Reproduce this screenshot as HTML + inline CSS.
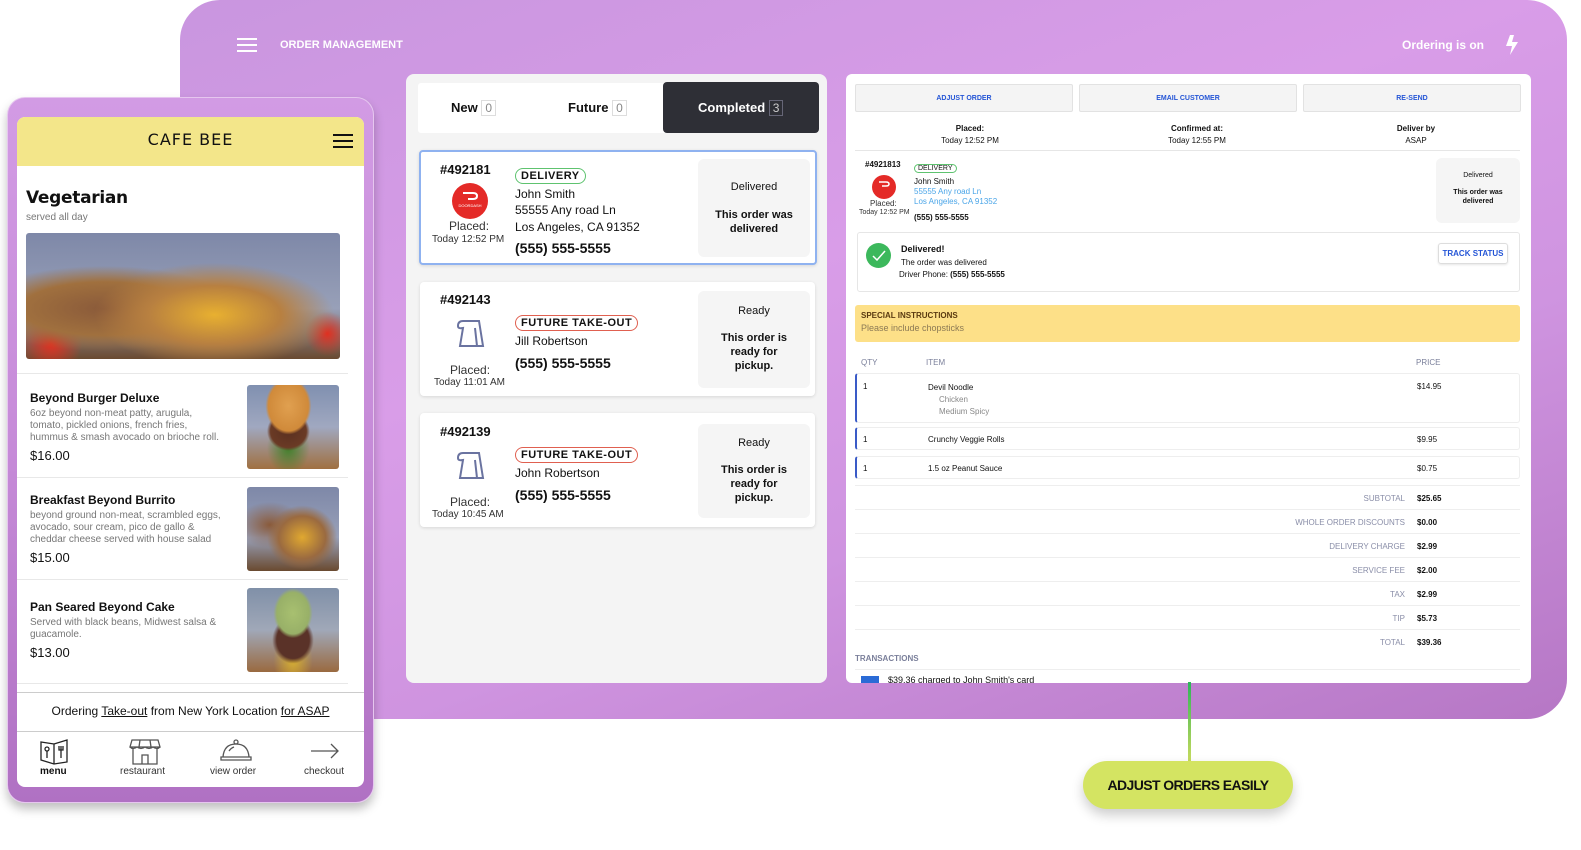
<!DOCTYPE html>
<html><head><meta charset="utf-8"><style>
*{box-sizing:border-box;margin:0;padding:0}
body{width:1581px;height:850px;background:#fff;position:relative;overflow:hidden;font-family:"Liberation Sans",Arial,sans-serif;color:#111}
.a{position:absolute}
.big{left:180px;top:0;width:1387px;height:719px;border-radius:40px 40px 40px 0;background:linear-gradient(160deg,#c996df 0%,#d99de8 40%,#cf94e0 65%,#b677c5 100%)}
.card{background:#fff;border-radius:4px;box-shadow:0 1px 3px rgba(0,0,0,.12)}
.st{background:#f5f5f5;border-radius:6px;text-align:center;font-size:11px}
.badge{display:inline-block;border:1.5px solid #e06050;border-radius:10px;padding:1px 5px;font-size:11px;font-weight:bold;letter-spacing:.5px}
.btn{top:84px;height:28px;width:218px;background:#f4f4f4;border:1px solid #e2e2e2;border-radius:2px;text-align:center;line-height:28px;font-size:7px;color:#2455d6;font-weight:bold}
.sm{font-size:8px}
.row{left:855px;width:665px;background:#fff;border:1px solid #eee;border-left:2px solid #3a5bc7;border-radius:3px;font-size:8px}
.tot{left:855px;width:665px;border-top:1px solid #eee;font-size:8px;height:24px}
.tot .l{position:absolute;right:115px;top:8px;color:#8a8ea8}
.tot .v{position:absolute;left:562px;top:8px;font-weight:bold}
.dd{border-radius:50%;background:#e42a27;color:#fff;text-align:center}
</style></head><body>
<div class="a big"></div>
<div class="a" style="left:237px;top:38px;width:20px;height:2px;background:#fff;box-shadow:0 6px 0 #fff,0 12px 0 #fff"></div>
<div class="a" style="left:280px;top:39px;color:#fff;font-size:11px;font-weight:bold">ORDER MANAGEMENT</div>
<div class="a" style="left:1402px;top:38px;color:#fff;font-size:12px;font-weight:bold">Ordering is on</div>
<svg class="a" style="left:1503px;top:35px" width="18" height="20" viewBox="0 0 18 20"><path d="M7 0 L3 11 H9 L7 20 L15 7 H9 L11 0Z" fill="#fff"/></svg>

<div class="a" style="left:406px;top:74px;width:421px;height:609px;background:#f4f4f4;border-radius:8px"></div>
<div class="a" style="left:418px;top:83px;width:400px;height:50px;background:#fff;border-radius:3px"></div>
<div class="a" style="left:663px;top:82px;width:156px;height:51px;background:#2e2f36;border-radius:4px"></div>
<div class="a" style="left:451px;top:100px;font-size:13px;font-weight:bold">New <span style="border:1px solid #ddd;color:#888;font-weight:normal;padding:0 3px;font-size:12px">0</span></div>
<div class="a" style="left:568px;top:100px;font-size:13px;font-weight:bold">Future <span style="border:1px solid #ddd;color:#888;font-weight:normal;padding:0 3px;font-size:12px">0</span></div>
<div class="a" style="left:698px;top:100px;font-size:13px;font-weight:bold;color:#fff">Completed <span style="border:1px solid #667;color:#ccc;font-weight:normal;padding:0 3px;font-size:12px">3</span></div>

<div class="a card" style="left:419px;top:150px;width:398px;height:115px;border:2px solid #8fb2f0"></div>
<div class="a" style="left:440px;top:162px;font-size:13px;font-weight:bold">#492181</div>
<div class="a dd" style="left:452px;top:183px;width:36px;height:36px;font-size:4px;line-height:45px">DOORDASH</div>
<svg class="a" style="left:462px;top:192px" width="16" height="8"><path d="M1 1 H11 Q15 1 15 4 Q15 7 11 7 H6" stroke="#fff" stroke-width="2" fill="none"/></svg>
<div class="a" style="left:449px;top:219px;font-size:12px;color:#333">Placed:</div>
<div class="a" style="left:432px;top:234px;font-size:10px;color:#333">Today 12:52 PM</div>
<div class="a" style="left:515px;top:166px"><span class="badge" style="border-color:#5ec36f">DELIVERY</span></div>
<div class="a" style="left:515px;top:187px;font-size:12px;line-height:15px">John Smith<br><span style="line-height:17px">55555 Any road Ln<br>Los Angeles, CA 91352</span></div>
<div class="a" style="left:515px;top:240px;font-size:14px;font-weight:bold">(555) 555-5555</div>
<div class="a st" style="left:698px;top:159px;width:112px;height:98px;padding-top:22px">Delivered<br><b style="display:block;margin-top:15px;line-height:14px">This order was<br>delivered</b></div>

<div class="a card" style="left:420px;top:282px;width:395px;height:114px"></div>
<div class="a" style="left:440px;top:292px;font-size:13px;font-weight:bold">#492143</div>
<svg class="a" style="left:455px;top:318px" width="32" height="32" viewBox="0 0 32 32" fill="none" stroke="#6a73a0" stroke-width="2"><path d="M3 8 Q3 3 8 3 H24 L28 28 H5 L8 10 Q3 11 3 8Z M20 10 L22 28"/></svg>
<div class="a" style="left:450px;top:363px;font-size:12px;color:#333">Placed:</div>
<div class="a" style="left:434px;top:377px;font-size:10px;color:#333">Today 11:01 AM</div>
<div class="a" style="left:515px;top:313px"><span class="badge">FUTURE TAKE-OUT</span></div>
<div class="a" style="left:515px;top:334px;font-size:12px">Jill Robertson</div>
<div class="a" style="left:515px;top:355px;font-size:14px;font-weight:bold">(555) 555-5555</div>
<div class="a st" style="left:698px;top:291px;width:112px;height:97px;padding-top:14px">Ready<br><b style="display:block;margin-top:14px;line-height:14px">This order is<br>ready for<br>pickup.</b></div>

<div class="a card" style="left:420px;top:413px;width:395px;height:114px"></div>
<div class="a" style="left:440px;top:424px;font-size:13px;font-weight:bold">#492139</div>
<svg class="a" style="left:455px;top:450px" width="32" height="32" viewBox="0 0 32 32" fill="none" stroke="#6a73a0" stroke-width="2"><path d="M3 8 Q3 3 8 3 H24 L28 28 H5 L8 10 Q3 11 3 8Z M20 10 L22 28"/></svg>
<div class="a" style="left:450px;top:495px;font-size:12px;color:#333">Placed:</div>
<div class="a" style="left:432px;top:509px;font-size:10px;color:#333">Today 10:45 AM</div>
<div class="a" style="left:515px;top:445px"><span class="badge">FUTURE TAKE-OUT</span></div>
<div class="a" style="left:515px;top:466px;font-size:12px">John Robertson</div>
<div class="a" style="left:515px;top:487px;font-size:14px;font-weight:bold">(555) 555-5555</div>
<div class="a st" style="left:698px;top:424px;width:112px;height:94px;padding-top:13px">Ready<br><b style="display:block;margin-top:14px;line-height:14px">This order is<br>ready for<br>pickup.</b></div>

<div class="a" style="left:846px;top:74px;width:685px;height:609px;background:#fff;border-radius:6px"></div>
<div class="a btn" style="left:855px">ADJUST ORDER</div>
<div class="a btn" style="left:1079px">EMAIL CUSTOMER</div>
<div class="a btn" style="left:1303px">RE-SEND</div>
<div class="a sm" style="left:910px;top:123px;width:120px;text-align:center;line-height:12px"><b>Placed:</b><br>Today 12:52 PM</div>
<div class="a sm" style="left:1137px;top:123px;width:120px;text-align:center;line-height:12px"><b>Confirmed at:</b><br>Today 12:55 PM</div>
<div class="a sm" style="left:1356px;top:123px;width:120px;text-align:center;line-height:12px"><b>Deliver by</b><br>ASAP</div>
<div class="a" style="left:855px;top:150px;width:665px;height:1px;background:#e6e6e6"></div>
<div class="a sm" style="left:865px;top:160px;font-weight:bold">#4921813</div>
<div class="a dd" style="left:872px;top:175px;width:24px;height:24px"></div>
<svg class="a" style="left:878px;top:181px" width="12" height="6"><path d="M1 1 H8 Q11 1 11 3 Q11 5 8 5 H4" stroke="#fff" stroke-width="1.5" fill="none"/></svg>
<div class="a" style="left:870px;top:199px;font-size:8px;color:#333">Placed:</div>
<div class="a" style="left:859px;top:209px;font-size:7px;color:#333">Today 12:52 PM</div>
<div class="a" style="left:914px;top:164px;border:1px solid #5ec36f;border-radius:6px;font-size:7px;padding:0 3px">DELIVERY</div>
<div class="a sm" style="left:914px;top:177px;line-height:10px">John Smith<br><span style="color:#4aa5e8">55555 Any road Ln<br>Los Angeles, CA 91352</span></div>
<div class="a sm" style="left:914px;top:213px;font-weight:bold">(555) 555-5555</div>
<div class="a st" style="left:1436px;top:158px;width:84px;height:65px;font-size:7px;padding-top:14px">Delivered<br><b style="display:block;margin-top:9px;line-height:9px">This order was<br>delivered</b></div>
<div class="a" style="left:857px;top:232px;width:663px;height:60px;border:1px solid #e6e6e6;border-radius:3px"></div>
<div class="a" style="left:866px;top:243px;width:25px;height:25px;border-radius:50%;background:#3cb85c"></div>
<svg class="a" style="left:872px;top:250px" width="14" height="11"><path d="M1 6 L5 10 L13 1" stroke="#fff" stroke-width="1.5" fill="none"/></svg>
<div class="a" style="left:901px;top:244px;font-size:9px;font-weight:bold">Delivered!</div>
<div class="a" style="left:901px;top:258px;font-size:8px">The order was delivered</div>
<div class="a" style="left:899px;top:270px;font-size:8px">Driver Phone: <b>(555) 555-5555</b></div>
<div class="a" style="left:1438px;top:243px;width:70px;height:21px;border:1px solid #ddd;border-radius:3px;font-size:8px;color:#2455d6;font-weight:bold;text-align:center;line-height:20px;box-shadow:0 1px 2px rgba(0,0,0,.1)">TRACK STATUS</div>
<div class="a" style="left:855px;top:305px;width:665px;height:37px;background:#fde088;border-radius:3px"></div>
<div class="a" style="left:861px;top:311px;font-size:8px;font-weight:bold;color:#5a3a10">SPECIAL INSTRUCTIONS</div>
<div class="a" style="left:861px;top:323px;font-size:9px;color:#8c7a55">Please include chopsticks</div>
<div class="a" style="left:861px;top:358px;font-size:8px;color:#7a7f9a">QTY</div>
<div class="a" style="left:926px;top:358px;font-size:8px;color:#7a7f9a">ITEM</div>
<div class="a" style="left:1416px;top:358px;font-size:8px;color:#7a7f9a">PRICE</div>
<div class="a row" style="top:373px;height:50px"><span class="a" style="left:6px;top:8px">1</span><span class="a" style="left:71px;top:8px;line-height:12px">Devil Noodle<br><span style="color:#888;margin-left:11px">Chicken</span><br><span style="color:#888;margin-left:11px">Medium Spicy</span></span><span class="a" style="left:560px;top:8px">$14.95</span></div>
<div class="a row" style="top:427px;height:23px"><span class="a" style="left:6px;top:7px">1</span><span class="a" style="left:71px;top:7px">Crunchy Veggie Rolls</span><span class="a" style="left:560px;top:7px">$9.95</span></div>
<div class="a row" style="top:456px;height:23px"><span class="a" style="left:6px;top:7px">1</span><span class="a" style="left:71px;top:7px">1.5 oz Peanut Sauce</span><span class="a" style="left:560px;top:7px">$0.75</span></div>
<div class="a tot" style="top:485px"><span class="l">SUBTOTAL</span><span class="v">$25.65</span></div>
<div class="a tot" style="top:509px"><span class="l">WHOLE ORDER DISCOUNTS</span><span class="v">$0.00</span></div>
<div class="a tot" style="top:533px"><span class="l">DELIVERY CHARGE</span><span class="v">$2.99</span></div>
<div class="a tot" style="top:557px"><span class="l">SERVICE FEE</span><span class="v">$2.00</span></div>
<div class="a tot" style="top:581px"><span class="l">TAX</span><span class="v">$2.99</span></div>
<div class="a tot" style="top:605px"><span class="l">TIP</span><span class="v">$5.73</span></div>
<div class="a tot" style="top:629px"><span class="l">TOTAL</span><span class="v">$39.36</span></div>
<div class="a" style="left:855px;top:654px;font-size:8px;font-weight:bold;color:#7a7f9a">TRANSACTIONS</div>
<div class="a" style="left:855px;top:669px;width:665px;height:1px;background:#eee"></div>
<div class="a" style="left:846px;top:672px;width:685px;height:11px;overflow:hidden"><div style="position:absolute;left:15px;top:4px;width:18px;height:7px;background:#2a6bd6"></div><div style="position:absolute;left:42px;top:3px;font-size:9px">$39.36 charged to John Smith's card</div></div>

<div class="a" style="left:1188px;top:682px;width:3px;height:80px;background:linear-gradient(#2bb35a,#7ec85a,#c8dc5e)"></div>
<div class="a" style="left:1083px;top:761px;width:210px;height:48px;border-radius:24px;background:#d4e462;box-shadow:0 6px 12px rgba(0,0,0,.2);text-align:center;line-height:48px;font-size:14px;font-weight:bold;letter-spacing:-.6px">ADJUST ORDERS EASILY</div>

<div class="a" style="left:7px;top:97px;width:367px;height:706px;border-radius:18px;background:linear-gradient(#d29be4,#c68bd8 50%,#b071c3);box-shadow:0 6px 10px rgba(0,0,0,.25);border:1px solid #e6c6ef"></div>
<div class="a" style="left:17px;top:117px;width:347px;height:670px;background:#fff;border-radius:8px;overflow:hidden">
 <div style="height:49px;background:#f3e68a;text-align:center;line-height:46px;font-size:16px;letter-spacing:1px;font-family:'DejaVu Sans',sans-serif">CAFE BEE</div>
 <div class="a" style="left:316px;top:17px;width:20px;height:2px;background:#111;box-shadow:0 6px 0 #111,0 12px 0 #111"></div>
 <div class="a" style="left:9px;top:71px;font-size:17px;font-family:'DejaVu Sans',sans-serif;font-weight:bold;letter-spacing:-.3px">Vegetarian</div>
 <div class="a" style="left:9px;top:95px;font-size:10px;color:#777">served all day</div>
 <div class="a" style="left:9px;top:116px;width:314px;height:126px;border-radius:3px;background:radial-gradient(ellipse at 60% 65%,#e8b030 0,#b88040 25%,transparent 45%),radial-gradient(ellipse at 25% 60%,#8a5a3a 0,#a0703e 25%,transparent 40%),radial-gradient(circle at 8% 88%,#e03020 0,transparent 10%),radial-gradient(circle at 96% 80%,#e03020 0,transparent 7%),linear-gradient(#7e88a8,#98a0b8 60%,#6a4a30)"></div>
 <div class="a" style="left:0;top:256px;width:331px;height:1px;background:#e8e8e8"></div>
 <div class="a" style="left:13px;top:274px;font-size:12px;font-weight:bold">Beyond Burger Deluxe</div>
 <div class="a" style="left:13px;top:291px;font-size:10px;color:#777;line-height:12px">6oz beyond non-meat patty, arugula,<br>tomato, pickled onions, french fries,<br>hummus &amp; smash avocado on brioche roll.</div>
 <div class="a" style="left:13px;top:331px;font-size:13px">$16.00</div>
 <div class="a" style="left:230px;top:268px;width:92px;height:84px;border-radius:3px;background:radial-gradient(ellipse at 45% 25%,#e0a050 0,#d08a3a 28%,transparent 32%),radial-gradient(ellipse at 45% 55%,#5a3020 0,#6a3a25 25%,transparent 30%),radial-gradient(ellipse at 45% 75%,#40802a 0,transparent 30%),linear-gradient(#8090b0,#a0a8c0 50%,#a07040)"></div>
 <div class="a" style="left:0;top:360px;width:331px;height:1px;background:#e8e8e8"></div>
 <div class="a" style="left:13px;top:376px;font-size:12px;font-weight:bold">Breakfast Beyond Burrito</div>
 <div class="a" style="left:13px;top:393px;font-size:10px;color:#777;line-height:12px">beyond ground non-meat, scrambled eggs,<br>avocado, sour cream, pico de gallo &amp;<br>cheddar cheese served with house salad</div>
 <div class="a" style="left:13px;top:433px;font-size:13px">$15.00</div>
 <div class="a" style="left:230px;top:370px;width:92px;height:84px;border-radius:3px;background:radial-gradient(ellipse at 60% 60%,#e0a830 0,#9a6a40 30%,transparent 45%),radial-gradient(ellipse at 25% 45%,#8a5a3a 0,transparent 35%),linear-gradient(#7e88a8,#98a0b8 60%,#6a4a30)"></div>
 <div class="a" style="left:0;top:462px;width:331px;height:1px;background:#e8e8e8"></div>
 <div class="a" style="left:13px;top:483px;font-size:12px;font-weight:bold">Pan Seared Beyond Cake</div>
 <div class="a" style="left:13px;top:500px;font-size:10px;color:#777;line-height:12px">Served with black beans, Midwest salsa &amp;<br>guacamole.</div>
 <div class="a" style="left:13px;top:528px;font-size:13px">$13.00</div>
 <div class="a" style="left:230px;top:471px;width:92px;height:84px;border-radius:3px;background:radial-gradient(ellipse at 50% 30%,#a8c070 0,#98b068 25%,transparent 30%),radial-gradient(ellipse at 50% 62%,#5a3228 0,#5a3228 25%,transparent 32%),radial-gradient(ellipse at 50% 85%,#d8b030 0,transparent 30%),linear-gradient(#8090a8,#a0a8b8 50%,#9a6a40)"></div>
 <div class="a" style="left:0;top:566px;width:331px;height:1px;background:#e8e8e8"></div>
 <div class="a" style="left:0;top:575px;width:347px;height:1px;background:#ccc"></div>
 <div class="a" style="left:0;top:587px;width:347px;text-align:center;font-size:12px">Ordering <u>Take-out</u> from New York Location <u>for ASAP</u></div>
 <div class="a" style="left:0;top:614px;width:347px;height:1px;background:#ccc"></div>
 <svg class="a" style="left:22px;top:621px" width="30" height="27" viewBox="0 0 30 27" fill="none" stroke="#222" stroke-width="1.3"><path d="M2 4 L15 6 L28 2 V24 L15 26 L2 22Z M15 6 V26"/><circle cx="8" cy="11" r="2"/><path d="M8 13 V20 M22 8 V20 M20 8 V12 H24 V8"/></svg>
 <div class="a" style="left:23px;top:649px;font-size:10px;font-weight:bold">menu</div>
 <svg class="a" style="left:112px;top:621px" width="32" height="27" viewBox="0 0 32 27" fill="none" stroke="#555" stroke-width="1.3"><path d="M3 2 H29 L31 9 H1Z M1 9 Q4 12 8 9 Q12 12 16 9 Q20 12 24 9 Q28 12 31 9 M4 11 V26 H28 V11 M13 26 V17 H19 V26 M11 2 L10 9 M21 2 L22 9"/></svg>
 <div class="a" style="left:103px;top:649px;font-size:10px;color:#333">restaurant</div>
 <svg class="a" style="left:203px;top:621px" width="32" height="26" viewBox="0 0 32 26" fill="none" stroke="#555" stroke-width="1.3"><circle cx="16" cy="4" r="2"/><path d="M3 19 Q4 6 16 6 Q28 6 29 19 M1 19 H31 V22 H1Z M9 13 Q11 10 14 9"/></svg>
 <div class="a" style="left:193px;top:649px;font-size:10px;color:#333">view order</div>
 <svg class="a" style="left:293px;top:625px" width="30" height="18" viewBox="0 0 30 18" fill="none" stroke="#555" stroke-width="1.3"><path d="M1 9 H28 M21 2 L28 9 L21 16"/></svg>
 <div class="a" style="left:287px;top:649px;font-size:10px;color:#333">checkout</div>
</div>
</body></html>
